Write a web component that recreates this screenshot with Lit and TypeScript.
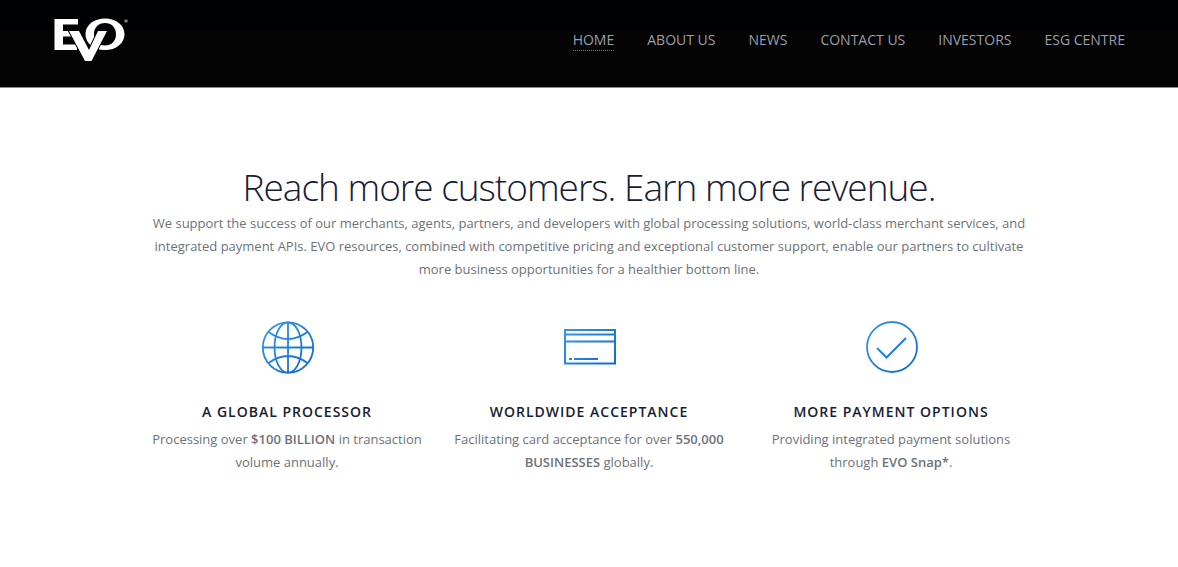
import { LitElement, html, css, svg } from "lit";
import { customElement } from "lit/decorators.js";

const links = ["HOME", "ABOUT US", "NEWS", "CONTACT US", "INVESTORS", "ESG CENTRE"];

const gradient = (id: string) => svg`
  <defs>
    <linearGradient id=${id} gradientUnits="userSpaceOnUse" x1="0" y1="0" x2="54" y2="54">
      <stop offset="0" stop-color="#3a9be8" />
      <stop offset="1" stop-color="#0b66cc" />
    </linearGradient>
  </defs>`;

const globe = html`<svg class="icon" viewBox="0 0 54 54" aria-hidden="true">
  ${gradient("g-globe")}
  <g fill="none" stroke="url(#g-globe)" stroke-width="1.8">
    <circle cx="28" cy="27.5" r="25.2" />
    <ellipse cx="28" cy="27.5" rx="13.5" ry="25.2" />
    <path d="M28 2V52.5M3 27.5H53M8.5 12Q28 26 47.5 12M8.5 43Q28 29 47.5 43" />
  </g>
</svg>`;

const card = html`<svg class="icon" viewBox="0 0 54 54" aria-hidden="true">
  ${gradient("g-card")}
  <g fill="none" stroke="url(#g-card)" stroke-width="2">
    <path d="M3 10H53V43.5H3ZM3 14.5H53M3 21.5H53M7 39H10M12 39H36" />
  </g>
</svg>`;

const check = html`<svg class="icon" viewBox="0 0 54 54" aria-hidden="true">
  ${gradient("g-check")}
  <g fill="none" stroke="url(#g-check)" stroke-width="1.8">
    <circle cx="28" cy="27" r="25" />
    <path d="M13 28L22.5 37.5L42 18" stroke-width="2" />
  </g>
</svg>`;

const features = [
  {
    icon: globe,
    title: "A GLOBAL PROCESSOR",
    text: html`Processing over <strong>$100 BILLION</strong> in transaction volume annually.`,
  },
  {
    icon: card,
    title: "WORLDWIDE ACCEPTANCE",
    text: html`Facilitating card acceptance for over <strong>550,000 BUSINESSES</strong> globally.`,
  },
  {
    icon: check,
    title: "MORE PAYMENT OPTIONS",
    text: html`Providing integrated payment solutions through <strong>EVO Snap*</strong>.`,
  },
];

@customElement("app-root")
export class AppRoot extends LitElement {
  static styles = css`
    :host {
      display: block;
      min-height: 100vh;
      background: #fff;
      color: #6e7278;
      font: 13px/23px "Open Sans", "Noto Sans", sans-serif;
    }
    .header {
      display: flex;
      justify-content: space-between;
      align-items: flex-start;
      padding: 17px 53px 25px;
      background: linear-gradient(#000103 31px, #040404 31px);
      border-bottom: 1px solid #8b858f;
    }
    .brand,
    .logo,
    .icon {
      display: block;
    }
    .logo {
      width: 76px;
      height: 45px;
    }
    .nav {
      display: flex;
      gap: 33px;
      padding-top: 12px;
    }
    .link {
      color: #9a9eab;
      font-size: 14px;
      line-height: 21px;
      text-decoration: none;
      border-bottom: 1px solid transparent;
    }
    .link.active {
      border-bottom: 1px dotted #3b86dc;
    }
    .main {
      max-width: 906px;
      margin: 0 auto;
      padding: 75px 0 40px;
      text-align: center;
    }
    .title {
      margin: 0 0 1px;
      color: #172033;
      font-size: 37px;
      line-height: 48px;
      font-weight: 300;
      letter-spacing: -1px;
    }
    .intro {
      margin: 0 15px;
    }
    .features {
      display: grid;
      grid-template-columns: repeat(3, 1fr);
      padding-top: 39px;
    }
    .feature {
      padding: 0 15px;
    }
    .icon {
      width: 54px;
      height: 54px;
      margin: 0 auto 26px;
    }
    .name {
      margin: 0 0 5px;
      color: #172033;
      font-size: 14px;
      line-height: 23px;
      font-weight: 600;
      letter-spacing: 1px;
    }
    .text {
      margin: 0;
    }
    strong {
      font-weight: 600;
    }
  `;

  render() {
    return html`
      <header class="header">
        <a class="brand" href="#" aria-label="EVO">
          <svg class="logo" viewBox="0 0 76 45" aria-hidden="true">
            <path fill="#fff" d="M1.5 2H25V7.5H10V14H24V19.5H10V27.5H24V33H1.5Z" />
            <path
              fill="#fff"
              fill-rule="evenodd"
              d="M52 1.5C63 1.5 71.5 8 71.5 17.2S63 33 52 33S32.5 26.5 32.5 17.2S41 1.5 52 1.5ZM52 6C45.5 6 41 10.5 41 17.2S45.5 28.5 52 28.5S63 24 63 17.2S58.5 6 52 6Z"
            />
            <path
              fill="#fff"
              stroke="#020203"
              stroke-width="2"
              paint-order="stroke"
              d="M16 14H26L36 33L45 14H54L38.5 44H32Z"
            />
            <circle cx="73" cy="4" r="1.8" fill="#777b84" />
          </svg>
        </a>
        <nav class="nav" aria-label="Main">
          ${links.map(
            (label, i) => html`<a class="link ${i === 0 ? "active" : ""}" href="#">${label}</a>`
          )}
        </nav>
      </header>
      <main class="main">
        <h1 class="title">Reach more customers. Earn more revenue.</h1>
        <p class="intro">
          We support the success of our merchants, agents, partners, and developers with global
          processing solutions, world-class merchant services, and integrated payment APIs. EVO
          resources, combined with competitive pricing and exceptional customer support, enable our
          partners to cultivate more business opportunities for a healthier bottom line.
        </p>
        <section class="features">
          ${features.map(
            (f) => html`<article class="feature">
              ${f.icon}
              <h2 class="name">${f.title}</h2>
              <p class="text">${f.text}</p>
            </article>`
          )}
        </section>
      </main>
    `;
  }
}
